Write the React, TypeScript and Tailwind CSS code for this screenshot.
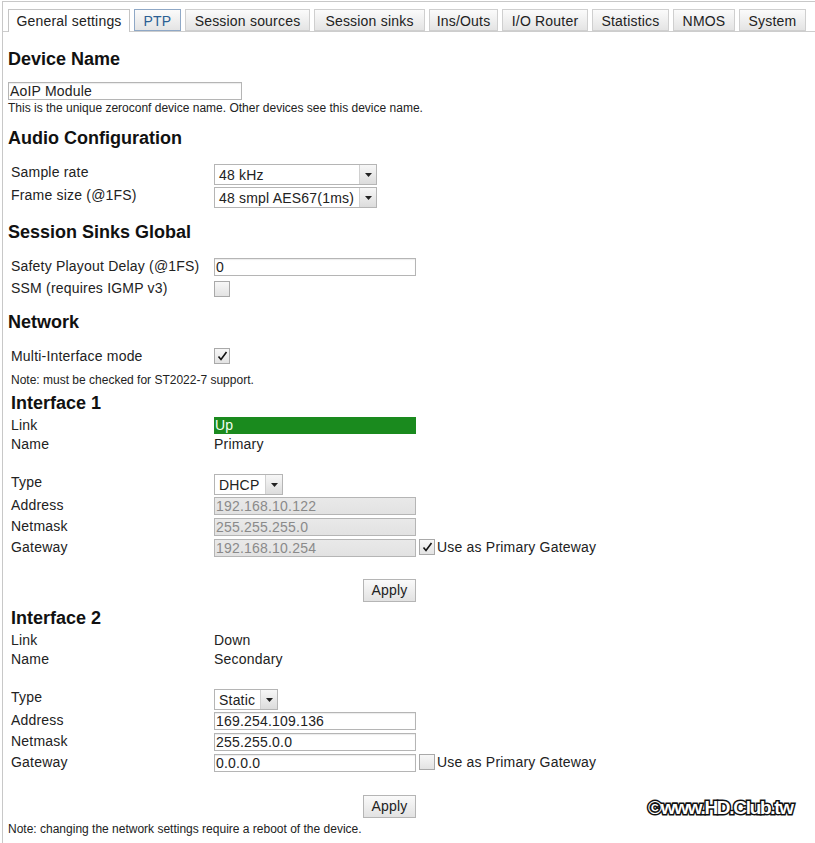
const tabs = [
    { label: "General settings", w: "w-[122px]", active: true },
    { label: "PTP", w: "w-[47px]", hover: true },
    { label: "Session sources", w: "w-[125px]" },
    { label: "Session sinks", w: "w-[111px]" },
    { label: "Ins/Outs", w: "w-[69px]" },
    { label: "I/O Router", w: "w-[86px]" },
    { label: "Statistics", w: "w-[77px]" },
    { label: "NMOS", w: "w-[62px]" },
    { label: "System", w: "w-[67px]" },
];

const Tab = ({ label, w, active, hover }: { label: string; w: string; active?: boolean; hover?: boolean }) => {
    if (active) {
        return (
            <div className={`${w} -mb-px flex h-[23px] items-center justify-center border border-b-0 border-[#c5c5c5] bg-white pt-[1px] text-[#222]`}>
                {label}
            </div>
        );
    }
    return (
        <div
            className={`${w} flex h-[22px] items-center justify-center border bg-gradient-to-b from-[#fbfbfb] to-[#e4e4e4] pt-[2px] ${
                hover ? "border-[#8fa8c6] text-[#2b5f93]" : "border-[#cfcfcf] text-[#222]"
            }`}
        >
            {label}
        </div>
    );
};

const Select = ({ value, w }: { value: string; w: string }) => (
    <div className={`${w} flex h-[21px] border border-[#b5b5b5] bg-white`}>
        <span className="flex-1 truncate pl-[4px] leading-[20px]">{value}</span>
        <span className="flex w-[17px] items-center justify-center border-l border-[#d0d0d0] bg-gradient-to-b from-[#f7f7f7] to-[#dcdcdc]">
            <svg width="7" height="4" viewBox="0 0 7 4">
                <path d="M0 0h7L3.5 4z" fill="#222" />
            </svg>
        </span>
    </div>
);

const Input = ({ value, disabled, w = "w-[202px]" }: { value: string; disabled?: boolean; w?: string }) => (
    <div
        className={`${w} h-[18px] border border-[#b5b5b5] pl-[1px] leading-[17px] ${
            disabled ? "bg-gradient-to-b from-[#e9e9e9] to-[#e2e2e2] text-[#8a8a8a]" : "bg-white text-[#222] shadow-[inset_0_1px_1px_rgba(0,0,0,0.08)]"
        }`}
    >
        {value}
    </div>
);

const Check = ({ checked }: { checked?: boolean }) => (
    <div className="flex h-[16px] w-[16px] items-center justify-center border border-[#a9a9a9] bg-gradient-to-b from-[#f7f7f7] to-[#e3e3e3]">
        {checked && (
            <svg width="11" height="10" viewBox="0 0 11 10">
                <path d="M1.5 5.5 4 8.5 9.5 1" fill="none" stroke="#111" strokeWidth="1.6" />
            </svg>
        )}
    </div>
);

const Row = ({ label, h, children }: { label: string; h: string; children?: React.ReactNode }) => (
    <div className={`flex ${h}`}>
        <div className="w-[206px] pl-[3px] leading-[17px]">{label}</div>
        <div className="flex items-start">{children}</div>
    </div>
);

const Heading = ({ children, className = "" }: { children: React.ReactNode; className?: string }) => (
    <h2 className={`text-[18px] leading-[22px] font-bold tracking-normal text-[#111] ${className}`}>{children}</h2>
);

const Iface = ({ n, link, up, name, type, typeW, addr, mask, gw, disabled, primary }: any) => (
    <div>
        <Heading className="pl-[3px]">Interface {n}</Heading>
        <div className="mt-[3px]">
            <Row label="Link" h="h-[19px]">
                {up ? (
                    <div className="h-[17px] w-[202px] bg-[#1a8a1e] pl-[1px] leading-[17px] text-[#f2fff2]">{link}</div>
                ) : (
                    <span className="leading-[17px]">{link}</span>
                )}
            </Row>
            <Row label="Name" h="h-[19px]">
                <span className="leading-[17px]">{name}</span>
            </Row>
            <div className="h-[19px]" />
            <Row label="Type" h="h-[23px]">
                <Select value={type} w={typeW} />
            </Row>
            <Row label="Address" h="h-[21px]">
                <Input value={addr} disabled={disabled} />
            </Row>
            <Row label="Netmask" h="h-[21px]">
                <Input value={mask} disabled={disabled} />
            </Row>
            <Row label="Gateway" h="h-[21px]">
                <Input value={gw} disabled={disabled} />
                <div className="ml-[3px]">
                    <Check checked={primary} />
                </div>
                <span className="ml-[2px] leading-[17px]">Use as Primary Gateway</span>
            </Row>
        </div>
    </div>
);

const ApplyButton = ({ className = "" }: { className?: string }) => (
    <div className={`flex w-[408px] justify-end ${className}`}>
        <button className="h-[23px] w-[53px] border border-[#b5b5b5] bg-gradient-to-b from-[#fafafa] to-[#e2e2e2] text-[14px] text-[#222]">
            Apply
        </button>
    </div>
);

export default function App() {
    return (
        <div className="relative h-[843px] w-[815px] overflow-hidden bg-white font-['Liberation_Sans',Arial,sans-serif] text-[14px] tracking-[0.2px] text-[#222]">
            <div className="ml-[2px] mt-[1px] h-full border-t border-l border-[#c8c8c8]">
                <div className="flex gap-[4px] border-b border-[#cdcdcd] pt-[7px] pl-[5px]">
                    {tabs.map((t) => (
                        <Tab key={t.label} {...t} />
                    ))}
                </div>

                <div className="pl-[5px]">
                    <Heading className="mt-[16px]">Device Name</Heading>
                    <div className="mt-[12px]">
                        <Input value="AoIP Module" w="w-[234px]" />
                    </div>
                    <p className="mt-[1px] text-[12px] leading-[14px] tracking-normal">
                        This is the unique zeroconf device name. Other devices see this device name.
                    </p>

                    <Heading className="mt-[12px]">Audio Configuration</Heading>
                    <div className="mt-[15px]">
                        <Row label="Sample rate" h="h-[23px]">
                            <Select value="48 kHz" w="w-[163px]" />
                        </Row>
                        <Row label="Frame size (@1FS)" h="h-[23px]">
                            <Select value="48 smpl AES67(1ms)" w="w-[163px]" />
                        </Row>
                    </div>

                    <Heading className="mt-[11px]">Session Sinks Global</Heading>
                    <div className="mt-[15px]">
                        <Row label="Safety Playout Delay (@1FS)" h="h-[22px]">
                            <Input value="0" />
                        </Row>
                        <Row label="SSM (requires IGMP v3)" h="h-[22px]">
                            <div className="mt-[1px]">
                                <Check />
                            </div>
                        </Row>
                    </div>

                    <Heading className="mt-[9px]">Network</Heading>
                    <div className="mt-[15px]">
                        <Row label="Multi-Interface mode" h="h-[22px]">
                            <Check checked />
                        </Row>
                    </div>
                    <p className="mt-[3px] pl-[3px] text-[12px] leading-[14px] tracking-normal">Note: must be checked for ST2022-7 support.</p>

                    <div className="mt-[5px]">
                        <Iface
                            n={1}
                            link="Up"
                            up
                            name="Primary"
                            type="DHCP"
                            typeW="w-[69px]"
                            addr="192.168.10.122"
                            mask="255.255.255.0"
                            gw="192.168.10.254"
                            disabled
                            primary
                        />
                    </div>
                    <ApplyButton className="mt-[19px]" />

                    <div className="mt-[5px]">
                        <Iface
                            n={2}
                            link="Down"
                            name="Secondary"
                            type="Static"
                            typeW="w-[64px]"
                            addr="169.254.109.136"
                            mask="255.255.0.0"
                            gw="0.0.0.0"
                        />
                    </div>
                    <ApplyButton className="mt-[20px]" />
                    <p className="mt-[4px] text-[12px] leading-[14px] tracking-normal">
                        Note: changing the network settings require a reboot of the device.
                    </p>
                </div>
            </div>

            <div className="absolute top-[797px] left-[648px] font-['Liberation_Sans_Narrow','Liberation_Sans',sans-serif] text-[19px] leading-[22px] font-bold tracking-[-1.3px] text-white [-webkit-text-stroke:3px_#111] [paint-order:stroke_fill]">
                ©www.HD.Club.tw
            </div>
        </div>
    );
}
